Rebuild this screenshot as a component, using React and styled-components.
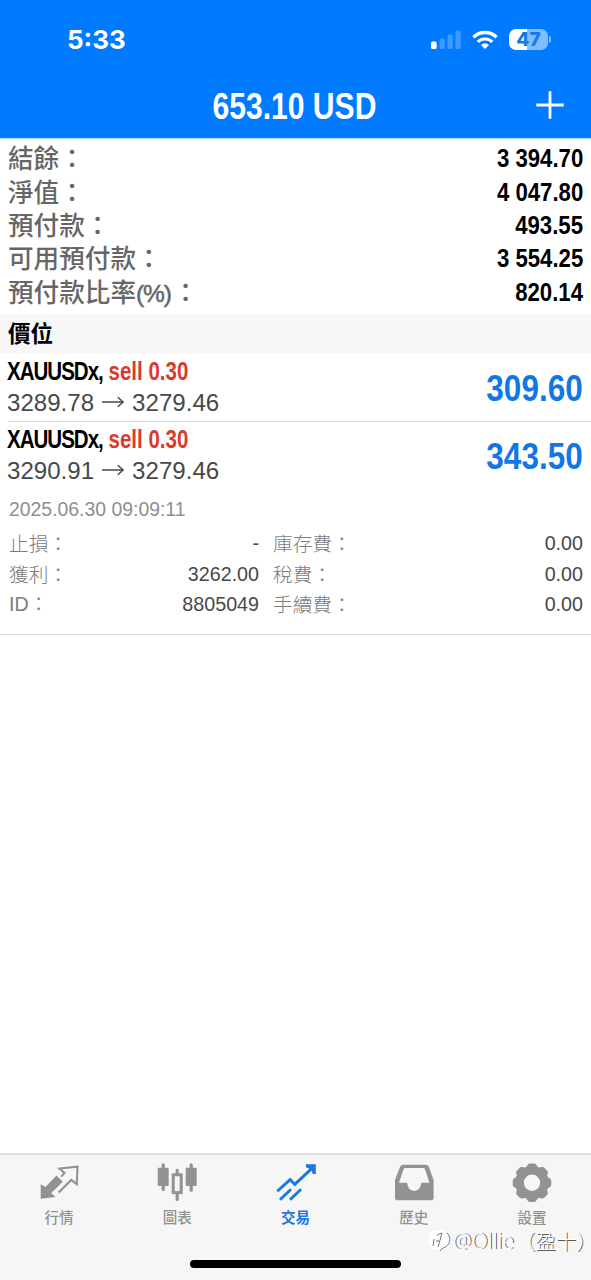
import React from 'react'
import styled, { createGlobalStyle } from 'styled-components'

const summary = [
  { label: '結餘', value: '3 394.70' },
  { label: '淨值', value: '4 047.80' },
  { label: '預付款', value: '493.55' },
  { label: '可用預付款', value: '3 554.25' },
  { label: '預付款比率', unit: '(%)', value: '820.14' },
]

const details = [
  ['止損：', '-', '庫存費：', '0.00'],
  ['獲利：', '3262.00', '稅費：', '0.00'],
  ['ID：', '8805049', '手續費：', '0.00'],
]

const teeth = [0, 45, 90, 135, 180, 225, 270, 315]

const QuotesIcon = () => (
  <Icon viewBox="0 0 48 44">
    <path d="M5.7 24.3l4.8 2.8L21.5 15.4l6.4 6.4L16.2 33l4.3 3.9-14.8 1.8z" fill="currentColor" />
    <path
      d="M26.3 16.6l3.2-3.7-5-4.4 18-1.8-.7 17.4-5.6-4.2L23.7 32.6"
      fill="none"
      stroke="currentColor"
      strokeWidth="2.1"
    />
  </Icon>
)

const ChartIcon = () => (
  <Icon viewBox="0 0 48 44">
    <g fill="currentColor">
      <rect x="4.7" y="7.7" width="11" height="18.4" rx="1" />
      <rect x="8.6" y="3.3" width="3.2" height="27.7" rx="1.5" />
      <rect x="32.7" y="7.7" width="11" height="18.4" rx="1" />
      <rect x="36.6" y="3.3" width="3.2" height="28.4" rx="1.5" />
      <rect x="22.6" y="8.7" width="3.2" height="7" rx="1.5" />
      <rect x="22.6" y="32" width="3.2" height="9" rx="1.5" />
    </g>
    <rect x="20.2" y="14.8" width="8" height="17.8" fill="none" stroke="currentColor" strokeWidth="3" />
  </Icon>
)

const TradeIcon = () => (
  <Icon viewBox="0 0 48 44">
    <g fill="none" stroke="currentColor" strokeWidth="2.9">
      <path d="M5.3 31.3L18.2 19.6l4.6 4.8L41 7.4" />
      <path d="M8 39.8l11-10.6M18 39.8l11-10.6" />
    </g>
    <path d="M34 4.3h9.8v9.8h-2.9L39 9.5l-5-2.3z" fill="currentColor" />
  </Icon>
)

const HistoryIcon = () => (
  <Icon viewBox="0 0 48 44">
    <path
      fillRule="evenodd"
      fill="currentColor"
      d="M13.4 4.7h22c2 0 3 1 3.6 2.7L43.3 19c.2.7.3 1.3.3 2v16.7c0 1.7-1 2.6-2.6 2.6H7.6C6 40.3 5 39.4 5 37.7V21c0-.7.1-1.3.3-2L9.8 7.4c.6-1.7 1.7-2.7 3.6-2.7zM15.6 8c-1.2 0-1.8.5-2.2 1.6L9 22.7h7.2c.8 0 1.1.4 1.2 1.2.5 4 3.1 6.8 6.8 6.8s6.3-2.8 6.8-6.8c.1-.8.4-1.2 1.2-1.2h7.2L35.2 9.6C34.8 8.5 34.2 8 33 8z"
    />
  </Icon>
)

const SettingsIcon = () => (
  <Icon viewBox="0 0 48 44">
    <circle cx="24" cy="22.7" r="12.5" fill="none" stroke="currentColor" strokeWidth="8.6" />
    {teeth.map(angle => (
      <path
        key={angle}
        d="M17.4 8.5l1.8-2.9q.8-2.2 2.8-2.2h4q2 0 2.8 2.2l1.8 2.9z"
        fill="currentColor"
        transform={`rotate(${angle} 24 22.7)`}
      />
    ))}
  </Icon>
)

const tabs = [
  { label: '行情', icon: <QuotesIcon /> },
  { label: '圖表', icon: <ChartIcon /> },
  { label: '交易', icon: <TradeIcon />, active: true },
  { label: '歷史', icon: <HistoryIcon /> },
  { label: '設置', icon: <SettingsIcon /> },
]

const Position = ({ from, to, profit }) => (
  <PositionRow>
    <div>
      <Order>
        <Ticker>XAUUSDx,</Ticker> <Side>sell 0.30</Side>
      </Order>
      <Prices>
        {from}
        <ArrowIcon viewBox="0 0 24 14">
          <path d="M0 7h22M16.5 2L22 7l-5.5 5" fill="none" stroke="currentColor" strokeWidth="1.5" />
        </ArrowIcon>
        {to}
      </Prices>
    </div>
    <Profit>{profit}</Profit>
  </PositionRow>
)

export default function App() {
  return (
    <Screen>
      <GlobalStyle />
      <Header>
        <StatusBar>
          <Clock>5:33</Clock>
          <StatusIcons>
            <svg width="30" height="20" viewBox="0 0 30 20" fill="#fff">
              <rect x="0" y="11.5" width="5.7" height="7.5" rx="1.5" />
              <g opacity=".24">
                <rect x="8.5" y="8.5" width="5.3" height="10.5" rx="1.5" />
                <rect x="16.5" y="4.5" width="5.3" height="14.5" rx="1.5" />
                <rect x="24.5" y="0.5" width="5.3" height="18.5" rx="1.5" />
              </g>
            </svg>
            <svg width="26" height="20" viewBox="0 0 26 20" fill="none" stroke="#fff">
              <path d="M1.4 7.3a16.6 16.6 0 0 1 23.2 0" strokeWidth="3.4" />
              <path d="M5.7 11.9a10.6 10.6 0 0 1 14.6 0" strokeWidth="3.2" />
              <path d="M13 19l-4-4.1a5.8 5.8 0 0 1 8 0z" fill="#fff" stroke="none" />
            </svg>
            <Battery>
              <Charge>47</Charge>
              <Nub />
            </Battery>
          </StatusIcons>
        </StatusBar>
        <TitleBar>
          <Title>653.10 USD</Title>
          <AddButton aria-label="add">
            <svg width="28" height="28" viewBox="0 0 28 28">
              <path d="M14 .3v27.4M.3 14h27.4" stroke="#fff" strokeWidth="2.8" />
            </svg>
          </AddButton>
        </TitleBar>
      </Header>

      <Summary>
        {summary.map(({ label, unit, value }) => (
          <SummaryRow key={label}>
            <SummaryLabel>
              {label}
              {unit && <Unit>{unit}</Unit>}：
            </SummaryLabel>
            <SummaryValue>{value}</SummaryValue>
          </SummaryRow>
        ))}
      </Summary>

      <SectionTitle>價位</SectionTitle>

      <Position from="3289.78" to="3279.46" profit="309.60" />
      <Divider />
      <Position from="3290.91" to="3279.46" profit="343.50" />
      <Details>
        <OpenTime>2025.06.30 09:09:11</OpenTime>
        {details.map(([label, value, label2, value2]) => (
          <DetailRow key={label}>
            <DetailLabel $latin={label.startsWith('ID')}>{label}</DetailLabel>
            <DetailValue>{value}</DetailValue>
            <DetailLabel $second>{label2}</DetailLabel>
            <DetailValue>{value2}</DetailValue>
          </DetailRow>
        ))}
      </Details>

      <TabBar>
        {tabs.map(({ label, icon, active }) => (
          <Tab key={label} $active={active}>
            {icon}
            <TabLabel $active={active}>{label}</TabLabel>
          </Tab>
        ))}
        <HomeIndicator />
        <Watermark>
          <Bubble viewBox="0 0 24 24">
            <rect x="0" y="1" width="20" height="19" rx="7" fill="#fff" />
            <path
              d="M5 10l-1 7M8 7l2-2 3-1-2 7-2 7M7 12h3M18 4c5 5 3 13-4 15l-3 3"
              fill="none"
              stroke="#777"
              strokeWidth="1"
            />
          </Bubble>
          @Ollie
          <WatermarkName>（盈十）</WatermarkName>
        </Watermark>
      </TabBar>
    </Screen>
  )
}

const GlobalStyle = createGlobalStyle`
  body {
    margin: 0;
    background: #fff;
    font-family: 'Liberation Sans', 'Noto Sans CJK TC', sans-serif;
  }
`

const Screen = styled.div`
  display: flex;
  flex-direction: column;
  height: 1280px;
  overflow: hidden;
  background: #fff;
`

const Header = styled.header`
  height: 139px;
  flex: none;
  background: #007aff;
  border-bottom: 1px solid #b5e0ff;
  box-sizing: border-box;
  color: #fff;
`

const StatusBar = styled.div`
  display: flex;
  align-items: center;
  justify-content: space-between;
  height: 79px;
  padding: 0 40px 0 67px;
`

const Clock = styled.div`
  font-family: Inter, sans-serif;
  font-size: 26px;
  font-weight: 700;
  line-height: 30px;
`

const StatusIcons = styled.div`
  display: flex;
  align-items: center;
  gap: 11px;
`

const Battery = styled.div`
  display: flex;
  align-items: center;
  gap: 1px;
`

const Charge = styled.div`
  width: 39px;
  height: 21px;
  border-radius: 7px;
  background: linear-gradient(90deg, #fff 47%, #80bdff 47%);
  color: #147ae8;
  font-family: Inter, sans-serif;
  font-size: 19px;
  font-weight: 800;
  line-height: 21px;
  text-align: center;
`

const Nub = styled.div`
  width: 2px;
  height: 7px;
  border-radius: 0 2px 2px 0;
  background: #80bdff;
`

const TitleBar = styled.div`
  display: grid;
  grid-template-columns: 1fr auto 1fr;
  align-items: center;
  height: 50px;
  padding: 0 27px 0 24px;
`

const Title = styled.h1`
  grid-column: 2;
  margin: 0;
  padding-top: 3px;
  font-size: 36.5px;
  font-weight: 700;
  line-height: 49px;
  transform: scaleX(0.825);
`

const AddButton = styled.button`
  justify-self: end;
  display: flex;
  padding: 0;
  border: 0;
  background: none;
`

const Summary = styled.div`
  flex: none;
  padding: 3px 8px 5px;
`

const SummaryRow = styled.div`
  display: flex;
  align-items: center;
  justify-content: space-between;
  height: 33.4px;
`

const SummaryLabel = styled.div`
  padding-top: 2px;
  color: #666;
  font-size: 25.6px;
  font-weight: 500;
  line-height: 33px;
`

const Unit = styled.span`
  margin-right: 2px;
  font-size: 24.5px;
  letter-spacing: -1.1px;
  -webkit-text-stroke: 0.5px #666;
`

const SummaryValue = styled.div`
  color: #000;
  font-size: 25.5px;
  font-weight: 700;
  line-height: 33px;
  transform: scaleX(0.87);
  transform-origin: right;
`

const SectionTitle = styled.h2`
  flex: none;
  margin: 0;
  padding: 1px 8px 0;
  height: 39px;
  box-sizing: border-box;
  background: #f7f7f7;
  color: #000;
  font-size: 22.5px;
  font-weight: 700;
  line-height: 39px;
`

const PositionRow = styled.div`
  flex: none;
  display: flex;
  align-items: center;
  justify-content: space-between;
  height: 68px;
  padding: 0 8px 0 7px;
`

const Divider = styled.div`
  flex: none;
  height: 1px;
  margin: 0 0 -1px 8px;
  background: #dcdcdc;
`

const Order = styled.div`
  color: #000;
  font-size: 25px;
  font-weight: 700;
  line-height: 32px;
  white-space: nowrap;
  transform: scaleX(0.82);
  transform-origin: left;
`

const Ticker = styled.span`
  letter-spacing: -1.2px;
`

const Side = styled.span`
  color: #d93a2c;
`

const Prices = styled.div`
  display: flex;
  align-items: center;
  color: #48484a;
  font-size: 24.1px;
  line-height: 32px;
`

const ArrowIcon = styled.svg`
  width: 23px;
  height: 14px;
  margin: 0 7px 2px 8px;
`

const Profit = styled.div`
  padding-top: 3px;
  color: #1277e6;
  font-size: 37.5px;
  font-weight: 700;
  line-height: 44px;
  transform: scaleX(0.84);
  transform-origin: right;
`

const Details = styled.div`
  flex: none;
  height: 146px;
  padding: 0 8px;
  box-sizing: border-box;
  border-bottom: 1px solid #dcdcdc;
`

const OpenTime = styled.div`
  height: 38.4px;
  padding-left: 1px;
  color: #8e8e93;
  font-size: 19.4px;
  line-height: 40px;
`

const DetailRow = styled.div`
  display: grid;
  grid-template-columns: 120px 131px 1fr 1fr;
  align-items: center;
  height: 30.2px;
  font-size: 19.7px;
  line-height: 30px;
`

const DetailLabel = styled.div`
  padding-top: ${props => (props.$latin ? '0' : '2px')};
  padding-left: ${props => (props.$second ? '14px' : '1px')};
  color: #7c7c7c;
  font-weight: 300;
`

const DetailValue = styled.div`
  color: #48484a;
  text-align: right;
`

const TabBar = styled.nav`
  position: relative;
  flex: none;
  display: flex;
  height: 127px;
  margin-top: auto;
  box-sizing: border-box;
  border-top: 2px solid #dfdfdf;
  background: #f6f6f6;
`

const Tab = styled.div`
  flex: 1;
  display: flex;
  flex-direction: column;
  align-items: center;
  padding-top: 5px;
  color: ${props => (props.$active ? '#1a77e0' : '#929292')};
`

const Icon = styled.svg`
  width: 48px;
  height: 44px;
`

const TabLabel = styled.div`
  padding-top: 2px;
  font-size: 14.5px;
  font-weight: ${props => (props.$active ? 700 : 500)};
  line-height: 24px;
`

const HomeIndicator = styled.div`
  position: absolute;
  bottom: 12px;
  left: 190px;
  width: 211px;
  height: 8px;
  border-radius: 4px;
  background: #000;
`

const Watermark = styled.div`
  position: absolute;
  left: 429px;
  top: 70px;
  display: flex;
  align-items: center;
  color: #fff;
  font-family: 'Noto Sans', 'Noto Sans CJK TC', sans-serif;
  font-size: 21px;
  font-weight: 300;
  line-height: 32px;
  white-space: nowrap;
  text-shadow: 1px 0 0 #555;
`

const WatermarkName = styled.span`
  margin-left: 11px;
  font-size: 20.5px;
  font-feature-settings: 'halt';
  text-shadow: 1px 1px 0 #5a5a5a;
`

const Bubble = styled.svg`
  width: 24px;
  height: 24px;
`
